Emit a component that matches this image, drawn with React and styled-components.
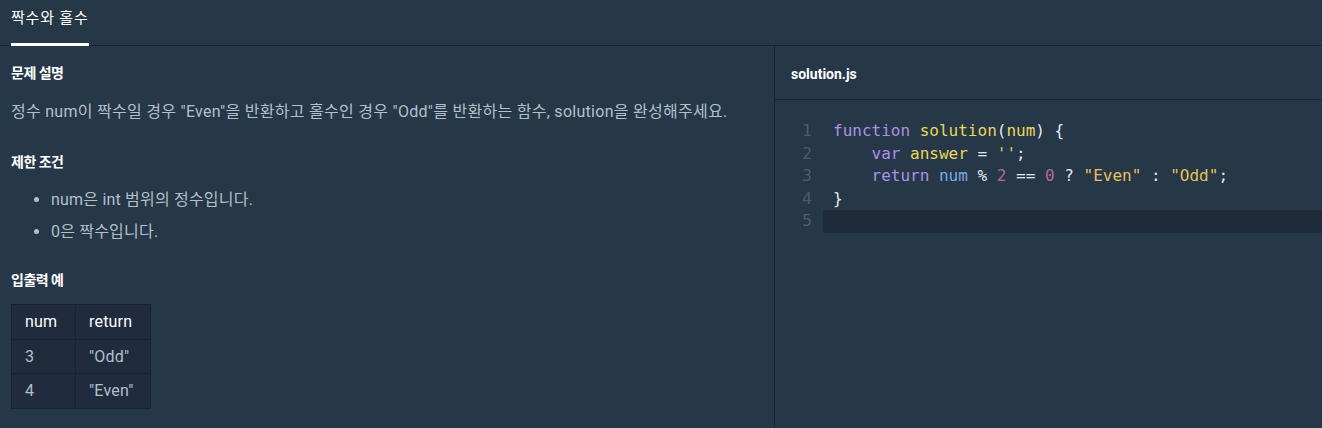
import styled, { createGlobalStyle } from 'styled-components';

const GlobalStyle = createGlobalStyle`
  html, body {
    margin: 0;
    padding: 0;
    background: #263747;
  }
  body {
    font-family: Roboto, "Noto Sans CJK KR", sans-serif;
    -webkit-font-smoothing: antialiased;
  }
  * { box-sizing: border-box; }
`;

const Page = styled.div`
  height: 428px;
  display: flex;
  flex-direction: column;
  background: #263747;
  overflow: hidden;
`;

const TabBar = styled.div`
  height: 46px;
  flex: none;
  display: flex;
  align-items: flex-end;
  padding-left: 11px;
  border-bottom: 1px solid #172334;
`;

const Tab = styled.div`
  height: 46px;
  margin-bottom: -1px;
  padding-top: 6px;
  font-size: 15px;
  letter-spacing: 0.8px;
  color: #ffffff;
  border-bottom: 3px solid ${p => (p.$active ? '#ffffff' : 'transparent')};
`;

const Main = styled.div`
  flex: 1;
  display: grid;
  grid-template-columns: 775px 1fr;
  min-height: 0;
`;

const Description = styled.div`
  padding: 11px 11px 0 11px;
  border-right: 1px solid #172334;
  color: #b2c0cc;
`;

const Heading = styled.h6`
  margin: 0;
  font-size: 14px;
  font-weight: 700;
  letter-spacing: -0.5px;
  line-height: 32px;
  color: #ffffff;
`;

const Paragraph = styled.p`
  margin: 7px 0 18px;
  font-size: 16px;
  letter-spacing: 0.28px;
  line-height: 32px;
`;

const List = styled.ul`
  margin: 6px 0 16px;
  padding-left: 40px;
`;

const Item = styled.li`
  font-size: 16px;
  letter-spacing: 0.2px;
  line-height: 32px;
  &::marker { color: #b2c0cc; }
`;

const Table = styled.table`
  margin-top: 8px;
  border-collapse: collapse;
  background: #202b3d;
  font-size: 16px;
  letter-spacing: 0.2px;
`;

const Th = styled.th`
  width: ${p => p.$w}px;
  height: 34.5px;
  padding: 0 13px;
  text-align: left;
  font-weight: 400;
  color: #ffffff;
  border: 1px solid #172334;
`;

const Td = styled.td`
  height: 34.5px;
  padding: 0 13px;
  color: #b2c0cc;
  border: 1px solid #172334;
`;

const Editor = styled.div`
  display: flex;
  flex-direction: column;
`;

const EditorHeader = styled.div`
  height: 54px;
  display: flex;
  align-items: center;
  padding: 2px 0 0 16px;
  border-bottom: 1px solid #172334;
  font-size: 14px;
  font-weight: 700;
  color: #ffffff;
`;

const Code = styled.div`
  padding-top: 20px;
  font-family: "DejaVu Sans Mono", monospace;
  font-size: 16px;
`;

const Line = styled.div`
  display: flex;
  height: 22.5px;
  line-height: 22.5px;
`;

const Gutter = styled.span`
  width: 37px;
  flex: none;
  text-align: right;
  color: #4b5b6e;
`;

const Content = styled.span`
  flex: 1;
  margin-left: 11px;
  padding-left: 10px;
  white-space: pre;
  color: #e3e9ee;
  background: ${p => (p.$active ? '#1f2a3a' : 'transparent')};
`;

const Tok = styled.span`
  color: ${p => ({
    kw: '#ad90ea',
    def: '#e9d85a',
    var: '#7ea8e8',
    num: '#b4679c',
    str: '#e8c05c',
    op: '#e3e9ee',
  }[p.$t])};
`;

const code = [
  [['kw', 'function'], ['op', ' '], ['def', 'solution'], ['op', '('], ['def', 'num'], ['op', ') {']],
  [['op', '    '], ['kw', 'var'], ['op', ' '], ['def', 'answer'], ['op', ' = '], ['str', "''"], ['op', ';']],
  [['op', '    '], ['kw', 'return'], ['op', ' '], ['var', 'num'], ['op', ' % '], ['num', '2'], ['op', ' == '], ['num', '0'], ['op', ' ? '], ['str', '"Even"'], ['op', ' : '], ['str', '"Odd"'], ['op', ';']],
  [['op', '}']],
  [],
];

const App = () => {
  return (
    <Page>
      <GlobalStyle />
      <TabBar>
        <Tab $active>짝수와 홀수</Tab>
      </TabBar>
      <Main>
        <Description>
          <Heading>문제 설명</Heading>
          <Paragraph>
            정수 num이 짝수일 경우 "Even"을 반환하고 홀수인 경우 "Odd"를 반환하는 함수, solution을 완성해주세요.
          </Paragraph>
          <Heading>제한 조건</Heading>
          <List>
            <Item>num은 int 범위의 정수입니다.</Item>
            <Item>0은 짝수입니다.</Item>
          </List>
          <Heading>입출력 예</Heading>
          <Table>
            <thead>
              <tr>
                <Th $w={64}>num</Th>
                <Th $w={75}>return</Th>
              </tr>
            </thead>
            <tbody>
              <tr>
                <Td>3</Td>
                <Td>"Odd"</Td>
              </tr>
              <tr>
                <Td>4</Td>
                <Td>"Even"</Td>
              </tr>
            </tbody>
          </Table>
        </Description>
        <Editor>
          <EditorHeader>solution.js</EditorHeader>
          <Code>
            {code.map((tokens, i) => (
              <Line key={i}>
                <Gutter>{i + 1}</Gutter>
                <Content $active={i === code.length - 1}>
                  {tokens.map(([t, text], j) => (
                    <Tok key={j} $t={t}>{text}</Tok>
                  ))}
                </Content>
              </Line>
            ))}
          </Code>
        </Editor>
      </Main>
    </Page>
  );
};

export default App;
